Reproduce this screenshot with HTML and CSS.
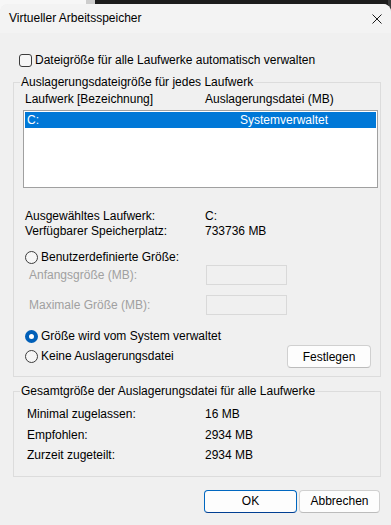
FILE: index.html
```html
<!DOCTYPE html>
<html lang="de">
  <head>
    <meta charset="UTF-8" />
    <meta name="viewport" content="width=device-width, initial-scale=1.0" />
    <title>Virtueller Arbeitsspeicher</title>
    <link rel="stylesheet" href="styles.css">
  </head>
  <body>
    <div class="dialog">
      <div class="titlebar">
        <span class="title">Virtueller Arbeitsspeicher</span>
        <svg class="close" width="10" height="10" viewBox="0 0 10 10">
          <path d="M0.5 0.5L9.5 9.5M9.5 0.5L0.5 9.5" stroke="#1a1a1a" stroke-width="1" fill="none" />
        </svg>
      </div>

      <div class="content">
        <label class="check"><span class="box"></span>Dateigröße für alle Laufwerke automatisch verwalten</label>

        <fieldset class="group drives">
          <legend>Auslagerungsdateigröße für jedes Laufwerk</legend>
          <div class="cols">
            <span>Laufwerk [Bezeichnung]</span>
            <span>Auslagerungsdatei (MB)</span>
          </div>
          <div class="list">
            <div class="item selected"><span>C:</span><span>Systemverwaltet</span></div>
          </div>
          <div class="info">
            <span>Ausgewähltes Laufwerk:</span><span>C:</span>
            <span>Verfügbarer Speicherplatz:</span><span>733736 MB</span>
          </div>

          <label class="radio custom"><span class="dot"></span>Benutzerdefinierte Größe:</label>
          <div class="size">
            <span>Anfangsgröße (MB):</span>
            <span class="field"></span>
          </div>
          <div class="size max">
            <span>Maximale Größe (MB):</span>
            <span class="field"></span>
          </div>

          <label class="radio system"><span class="dot on"></span>Größe wird vom System verwaltet</label>
          <div class="none-row">
            <label class="radio"><span class="dot"></span>Keine Auslagerungsdatei</label>
            <button type="button" class="btn set">Festlegen</button>
          </div>
        </fieldset>

        <fieldset class="group total">
          <legend>Gesamtgröße der Auslagerungsdatei für alle Laufwerke</legend>
          <div class="totals">
            <span>Minimal zugelassen:</span><span>16 MB</span>
            <span>Empfohlen:</span><span>2934 MB</span>
            <span>Zurzeit zugeteilt:</span><span>2934 MB</span>
          </div>
        </fieldset>

        <div class="actions">
          <button type="button" class="btn ok">OK</button>
          <button type="button" class="btn cancel">Abbrechen</button>
        </div>
      </div>
    </div>
  </body>
</html>
```

FILE: styles.css
```css
body {
  margin: 0;
  width: 391px;
  height: 525px;
  overflow: hidden;
  font-family: "Liberation Sans", Arial, sans-serif;
  font-size: 12px;
  line-height: 15px;
  color: #000;
  background: #f0f0f0 linear-gradient(to right, #f7f7f7 86px, #cdcdcd 86px, #cdcdcd 95px, #1c1c1c 95px, #1c1c1c 388px, #3a3a3a 388px) top left / 100% 14px no-repeat;
}

.dialog {
  margin-top: 4px;
  height: 521px;
  background-color: #f0f0f0;
  border-radius: 8px 8px 0 0;
  overflow: hidden;
}

.titlebar {
  height: 29px;
  display: flex;
  align-items: center;
  justify-content: space-between;
  padding: 0 9px;
  background-color: #f3f3f3;
}

.content {
  padding: 0 10px 0 13px;
}

/* checkbox */
.check {
  display: flex;
  align-items: center;
  margin: 20px 0 0 6px;
  height: 15px;
}

.box {
  width: 11px;
  height: 11px;
  border: 1px solid #3c3c3c;
  border-radius: 3px;
  background-color: #f6f6f6;
  margin-right: 3px;
}

/* group boxes */
.group {
  margin: 7px 0 0 0;
  border: 1px solid #dcdcdc;
  padding: 0 2px 8px 9px;
  min-width: 0;
}

.group legend {
  padding: 0 1px;
  margin-left: -3px;
  line-height: 15px;
}

.cols {
  display: grid;
  grid-template-columns: 180px auto;
  margin-top: 2px;
  padding-left: 2px;
}

.list {
  margin-top: 3px;
  height: 74px;
  border: 1px solid #a0a0a0;
  padding: 1px;
  background-color: #fff;
}

.item {
  display: grid;
  grid-template-columns: 213px auto;
  height: 16px;
  line-height: 16px;
  padding-left: 2px;
}

.item.selected {
  background-color: #0078d7;
  color: #fff;
}

.info {
  display: grid;
  grid-template-columns: 180px auto;
  margin-top: 21px;
  padding-left: 2px;
}

/* radio buttons */
.radio {
  display: flex;
  align-items: center;
  height: 15px;
  margin-left: 2px;
}

.dot {
  width: 11px;
  height: 11px;
  border: 1px solid #3c3c3c;
  border-radius: 50%;
  background-color: #f6f6f6;
  margin-right: 3px;
}

.dot.on {
  width: 5px;
  height: 5px;
  border: 4px solid #005fb8;
  background-color: #fff;
}

.radio.custom {
  margin-top: 11px;
}

.radio.system {
  margin-top: 14px;
}

.size {
  display: grid;
  grid-template-columns: 177px 81px;
  align-items: center;
  height: 20px;
  padding-left: 6px;
  color: #a0a0a0;
}

.size.max {
  margin-top: 10px;
}

.field {
  height: 18px;
  border: 1px solid #d9d9d9;
  background-color: #f0f0f0;
}

.none-row {
  display: flex;
  align-items: center;
  justify-content: space-between;
  height: 23px;
  margin-top: 1px;
}

/* buttons */
.btn {
  font-family: "Liberation Sans", Arial, sans-serif;
  font-size: 12px;
  color: #000;
  height: 23px;
  padding: 0;
  background-color: #fdfdfd;
  border: 1px solid #d0d0d0;
  border-bottom-color: #bcbcbc;
  border-radius: 4px;
}

.btn.set {
  width: 84px;
  margin-right: 7px;
}

.totals {
  display: grid;
  grid-template-columns: 178px auto;
  line-height: 20.5px;
  margin-top: 5px;
  padding-left: 4px;
  padding-bottom: 2px;
}

.actions {
  display: flex;
  justify-content: flex-end;
  gap: 2px;
  margin-top: 13px;
  padding-right: 1px;
}

.btn.ok {
  width: 93px;
  border-color: #0067c0;
  border-bottom-color: #003e92;
}

.btn.cancel {
  width: 81px;
}
```
